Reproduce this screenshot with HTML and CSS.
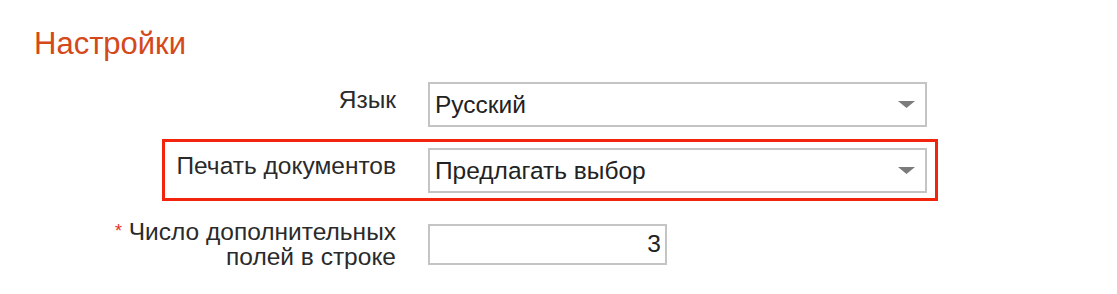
FILE: index.html
```html
<!DOCTYPE html>
<html lang="ru">
<head>
  <meta charset="UTF-8">
  <meta name="viewport" content="width=device-width, initial-scale=1.0">
  <title>Настройки</title>
  <link rel="stylesheet" href="styles.css">
</head>
<body>

  <div class="page">
    <h2 class="title">Настройки</h2>

    <form class="form">
      <div class="row">
        <label class="label">Язык</label>
        <div class="select">
          <span>Русский</span>
          <svg class="arrow" width="17" height="7" viewBox="0 0 17 7"><polygon points="0,0 17,0 8.5,7" fill="#7b7b7b"/></svg>
        </div>
      </div>

      <div class="row highlight">
        <label class="label">Печать документов</label>
        <div class="select">
          <span>Предлагать выбор</span>
          <svg class="arrow" width="17" height="7" viewBox="0 0 17 7"><polygon points="0,0 17,0 8.5,7" fill="#7b7b7b"/></svg>
        </div>
      </div>

      <div class="row row-multi">
        <label class="label" for="fields"><span class="req">*</span> Число дополнительных<br>полей в строке</label>
        <input type="text" id="fields" class="number" value="3">
      </div>
    </form>
  </div>

</body>
</html>
```

FILE: styles.css
```css
body {
  margin: 0;
  font-family: "Liberation Sans", Arial, sans-serif;
  background-color: #fff;
  color: #2a2a2a;
}

.page {
  padding: 27px 0 0 34px;
}

.title {
  margin: 0;
  font-size: 31px;
  font-weight: normal;
  line-height: 34px;
  color: #d4491a;
}

.form {
  margin-top: 21px;
}

.row {
  position: relative;
  display: flex;
  align-items: flex-start;
  gap: 32px;
  width: 821px;
  margin-left: 72px;
}

.row + .row {
  margin-top: 21px;
}

.label {
  width: 290px;
  flex-shrink: 0;
  padding-top: 5px;
  text-align: right;
  font-size: 24.5px;
  line-height: 25px;
  white-space: nowrap;
}

.row-multi {
  align-items: center;
}

.row + .row-multi {
  margin-top: 26px;
}

.row-multi .label {
  padding-top: 0;
}

.req {
  font-size: 18px;
  color: #e8311a;
  vertical-align: top;
}

.select {
  display: flex;
  align-items: center;
  justify-content: space-between;
  box-sizing: border-box;
  width: 499px;
  height: 45px;
  padding: 0 10px 0 5px;
  border: 2px solid #c4c4c4;
  font-size: 24.5px;
  color: #222;
}

.number {
  box-sizing: border-box;
  width: 239px;
  height: 41px;
  padding: 0 4px;
  border: 2px solid #c4c4c4;
  font-family: inherit;
  font-size: 24.5px;
  color: #222;
  text-align: right;
  outline: none;
}

/* annotation frame around the print row */
.highlight::after {
  content: "";
  position: absolute;
  left: 56px;
  right: -11px;
  top: -9px;
  bottom: -8px;
  border: 3px solid #f2240e;
  pointer-events: none;
}
```
